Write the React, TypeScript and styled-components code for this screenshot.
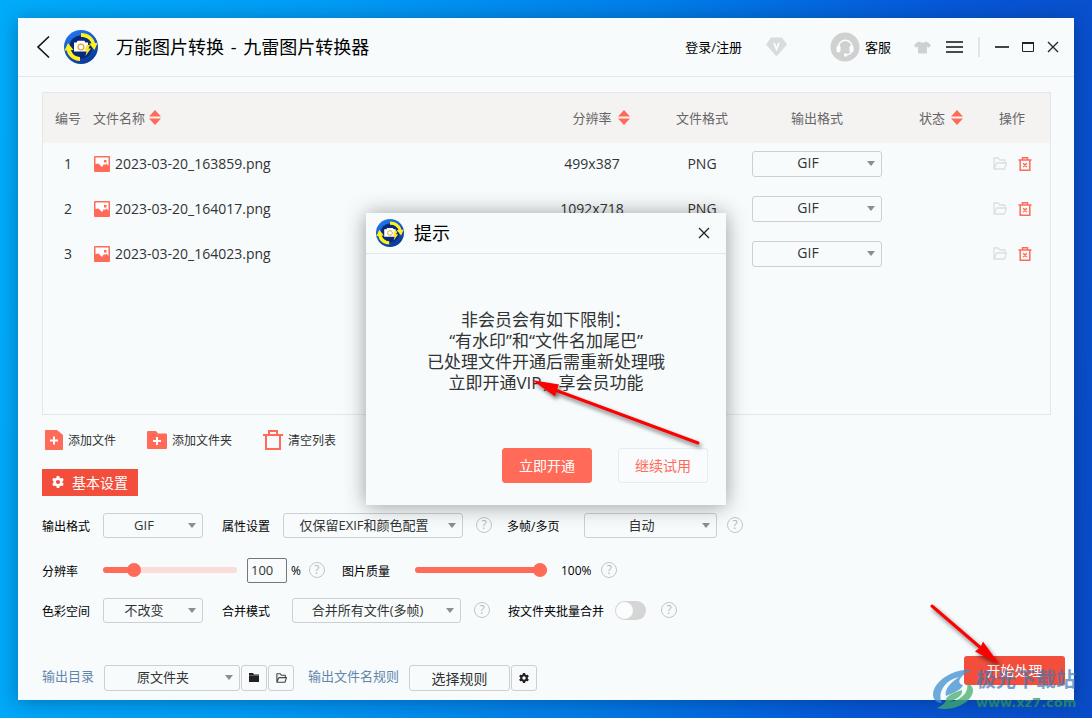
import React, { useId, useState } from 'react';
import styled, { createGlobalStyle } from 'styled-components';

const accent = '#ff6b58';
const accentDark = '#f24e3b';
const surface = '#f7fbfc';
const line = '#e4e7e9';

const GlobalStyle = createGlobalStyle`
  *, *::before, *::after { box-sizing: border-box; }
  body { margin: 0; }
  body, button, input, select {
    font-family: "Open Sans", "Noto Sans CJK SC", sans-serif;
    font-size: 13px;
    color: #333;
  }
  button { padding: 0; border: 0; background: none; cursor: pointer; }
`;

const Desktop = styled.div`
  position: relative;
  display: flex;
  min-height: 100vh;
  padding: 18px;
  overflow: hidden;
  background: linear-gradient(97deg, #00acfa 0%, #009cf6 28%, #007fe9 55%, #0658d8 80%, #0a4cc8 100%);
`;

const AppWindow = styled.div`
  flex: 1;
  display: flex;
  flex-direction: column;
  min-width: 0;
  background: ${surface};
  box-shadow: 0 2px 18px rgba(0, 20, 50, 0.35);
`;

/* title bar */
const TitleBar = styled.header`
  display: flex;
  align-items: center;
  justify-content: space-between;
  height: 59px;
  padding: 0 15px 0 18px;
  border-bottom: 1px solid ${line};
`;

const Group = styled.div<{ $gap?: number }>`
  display: flex;
  align-items: center;
  gap: ${p => p.$gap ?? 0}px;
`;

const AppTitle = styled.h1`
  margin: 0 0 0 4px;
  font-size: 18px;
  font-weight: 400;
  line-height: 24px;
  color: #000;
`;

const Dash = styled.span`
  margin: 0 2px;
`;

const IconButton = styled.button`
  display: flex;
  align-items: center;
  justify-content: center;
  flex: none;
`;

const TitleLink = styled.a`
  color: #000;
  text-decoration: none;
  line-height: 20px;
`;

const SupportLink = styled(TitleLink)`
  display: flex;
  align-items: center;
  gap: 5px;
`;

const SupportTools = styled(Group)`
  margin: 0 13px 0 43px;
`;

const Divider = styled.span`
  width: 2px;
  height: 20px;
  background: #e3e6e7;
`;

/* file list */
const Main = styled.main`
  flex: 1;
  display: flex;
  flex-direction: column;
  padding: 15px 23px 0 24px;
`;

const ListBox = styled.section`
  flex: 1;
  min-height: 240px;
  border: 1px solid ${line};
`;

const FileTable = styled.table`
  width: 100%;
  table-layout: fixed;
  border-collapse: collapse;
`;

const Col = styled.col<{ $w?: number }>`
  width: ${p => (p.$w ? `${p.$w}px` : 'auto')};
`;

const Th = styled.th<{ $left?: boolean; $ops?: boolean }>`
  height: 50px;
  padding: 0 ${p => (p.$ops ? 8 : 0)}px 2px 0;
  background: #f5f3f2;
  font-weight: 400;
  color: #666;
  text-align: ${p => (p.$left ? 'left' : 'center')};
`;

const Td = styled.td<{ $ops?: boolean }>`
  height: 45px;
  padding: 0 ${p => (p.$ops ? 8 : 0)}px 4px 0;
  font-size: 14px;
  text-align: center;
`;

const SortLabel = styled.button<{ $centered?: boolean }>`
  display: inline-flex;
  align-items: center;
  gap: ${p => (p.$centered ? 6 : 4)}px;
  padding-left: ${p => (p.$centered ? 18 : 0)}px;
  color: #666;
`;

const FileName = styled.div`
  display: flex;
  align-items: center;
  gap: 5px;
`;

const RowActions = styled.div`
  display: flex;
  justify-content: center;
  gap: 11px;
`;

/* select */
const SelectBox = styled.span<{ $w: number; $h: number }>`
  position: relative;
  display: inline-flex;
  flex: none;
  width: ${p => p.$w}px;
  height: ${p => p.$h}px;
  vertical-align: middle;
`;

const NativeSelect = styled.select<{ $size: number }>`
  appearance: none;
  width: 100%;
  height: 100%;
  padding: 0 18px 2px 0;
  border: 1px solid #cdd0d2;
  border-radius: 3px;
  background: transparent;
  font-size: ${p => p.$size}px;
  text-align: center;
  text-align-last: center;
`;

const Caret = styled.svg`
  position: absolute;
  right: 7px;
  top: 50%;
  margin-top: -3px;
  pointer-events: none;
`;

/* settings */
const Toolbar = styled.div`
  display: flex;
  gap: 31px;
  margin-top: 15px;
  padding-left: 3px;
`;

const ToolButton = styled.button`
  display: flex;
  align-items: center;
  gap: 5px;
  height: 20px;
  font-size: 12px;
`;

const Tab = styled.button`
  display: flex;
  align-items: center;
  justify-content: center;
  gap: 8px;
  width: 96px;
  height: 27px;
  margin-top: 19px;
  padding-bottom: 1px;
  background: ${accentDark};
  color: #fff;
  font-size: 14px;
`;

const SettingsRow = styled.div<{ $top: number }>`
  display: flex;
  align-items: center;
  height: 25px;
  margin-top: ${p => p.$top}px;
`;

const FieldLabel = styled.label<{ $w: number; $before?: number }>`
  flex: none;
  width: ${p => p.$w}px;
  margin-left: ${p => p.$before ?? 0}px;
  font-size: 12px;
  color: #000;
`;

const Help = styled.button<{ $before: number }>`
  flex: none;
  width: 16px;
  height: 16px;
  margin: 0 0 2px ${p => p.$before}px;
  border: 1px solid #c3c6c8;
  border-radius: 50%;
  font-size: 12px;
  line-height: 14px;
  color: #b4b7b9;
`;

const Slider = styled.input<{ $w: number; $fill: number }>`
  appearance: none;
  flex: none;
  width: ${p => p.$w}px;
  height: 14px;
  margin: 0 0 2px;
  background: transparent;
  &::-webkit-slider-runnable-track {
    height: 6px;
    border-radius: 3px;
    background: linear-gradient(to right, ${accent} ${p => p.$fill}%, #fadcd8 ${p => p.$fill}%);
  }
  &::-webkit-slider-thumb {
    appearance: none;
    width: 14px;
    height: 14px;
    margin-top: -4px;
    border-radius: 50%;
    background: ${accent};
  }
`;

const NumberBox = styled.input`
  width: 40px;
  height: 25px;
  margin: 0 4px 0 10px;
  padding: 0 3px 2px;
  border: 1px solid #777;
  border-radius: 2px;
  background: transparent;
`;

const Unit = styled.span<{ $before?: number }>`
  margin-left: ${p => p.$before ?? 0}px;
  font-size: 12px;
  color: #000;
`;

const Toggle = styled.input`
  appearance: none;
  flex: none;
  width: 31px;
  height: 19px;
  margin: 0;
  padding: 1px;
  border-radius: 10px;
  background: #d5d5d5;
  &::before {
    content: '';
    display: block;
    width: 17px;
    height: 17px;
    border-radius: 50%;
    background: #fbfdfd;
  }
  &:checked { background: ${accent}; padding-left: 13px; }
`;

/* footer */
const Footer = styled.footer`
  display: flex;
  justify-content: space-between;
  align-items: flex-end;
  margin-top: 33px;
  padding: 0 9px 9px 24px;
`;

const FooterLabel = styled.label<{ $w: number }>`
  width: ${p => p.$w}px;
  padding-bottom: 4px;
  color: #6485ab;
  line-height: 20px;
`;

const OutlineButton = styled.button<{ $w: number }>`
  display: flex;
  align-items: center;
  justify-content: center;
  width: ${p => p.$w}px;
  height: 26px;
  padding-bottom: 1px;
  border: 1px solid #cdd0d2;
  border-radius: 3px;
  font-size: 14px;
`;

const NameRule = styled(Group)`
  margin-left: 14px;
`;

const StartButton = styled.button`
  width: 101px;
  height: 29px;
  margin-bottom: 6px;
  padding-bottom: 1px;
  border-radius: 3px;
  background: ${accentDark};
  color: #fff;
  font-size: 14px;
`;

/* dialog */
const Dialog = styled.div`
  position: absolute;
  left: 50%;
  top: 50%;
  transform: translate(-50%, -50%);
  display: flex;
  flex-direction: column;
  width: 360px;
  background: ${surface};
  box-shadow: 0 1px 20px rgba(0, 0, 0, 0.38);
`;

const DialogHead = styled.div`
  display: flex;
  align-items: center;
  gap: 10px;
  height: 41px;
  padding: 0 16px 0 10px;
  border-bottom: 1px solid ${line};
`;

const DialogTitle = styled.h2`
  flex: 1;
  margin: 0;
  font-size: 18px;
  font-weight: 400;
  line-height: 24px;
  color: #000;
`;

const DialogText = styled.p`
  margin: 55px 0;
  font-size: 17px;
  line-height: 21px;
  text-align: center;
`;

const DialogActions = styled.div`
  display: flex;
  justify-content: flex-end;
  gap: 26px;
  padding: 0 18px 22px;
`;

const DialogButton = styled.button<{ $primary?: boolean }>`
  width: 90px;
  height: 35px;
  padding-bottom: 2px;
  border: 1px solid ${p => (p.$primary ? accent : '#e3edf5')};
  border-radius: 3px;
  background: ${p => (p.$primary ? accent : '#f9fbfd')};
  color: ${p => (p.$primary ? '#fff' : accent)};
  font-size: 14px;
`;

/* annotations over the window */
const DialogArrow = styled.svg`
  position: absolute;
  left: 160px;
  top: 160px;
  pointer-events: none;
  filter: drop-shadow(2px 3px 2px rgba(0, 0, 0, 0.55));
`;

const StartArrow = styled.svg`
  position: absolute;
  right: 84px;
  bottom: 44px;
  pointer-events: none;
  filter: drop-shadow(2px 3px 2px rgba(0, 0, 0, 0.55));
`;

const Watermark = styled.div`
  position: absolute;
  right: 8px;
  bottom: 7px;
  display: flex;
  align-items: flex-end;
  width: 152px;
  pointer-events: none;
`;

const SiteName = styled.div`
  width: 108px;
  margin-bottom: 3px;
  font-size: 20px;
  font-weight: 700;
  line-height: 25px;
  white-space: nowrap;
  color: rgba(62, 120, 182, 0.7);
`;

const SiteUrl = styled.div`
  font-family: "DejaVu Sans", sans-serif;
  font-size: 13px;
  font-weight: 700;
  line-height: 16px;
  color: rgba(42, 150, 85, 0.75);
`;

const Logo = ({ size }: { size: number }) => {
  const id = useId();
  return (
    <svg width={size} height={size} viewBox="0 0 34 34" aria-hidden="true">
      <defs>
        <linearGradient id={id} x1="0" y1="0" x2="0.5" y2="1">
          <stop offset="0" stopColor="#2a80f5" />
          <stop offset="0.5" stopColor="#1559cf" />
          <stop offset="1" stopColor="#0c3c9c" />
        </linearGradient>
      </defs>
      <circle cx="17" cy="17" r="17" fill={`url(#${id})`} />
      <circle cx="17" cy="17" r="11.500" fill="#062a78" />
      <path d="M17 3c7 0 12.500 4 14 10h2.500L30.500 20 25 13.500h2.500C26 9.500 22.500 7 17 7z" fill="#fff01c" />
      <path d="M16 31C9 30.500 4 26.500 2.800 20.500H.5L4 13l5.500 7H7c1.200 4 4.300 6.700 9 7z" fill="#fff01c" />
      <path d="M10 12.500h2.500l1.200-1.700h6.600l1.200 1.700H24V21.500H10z" fill="#fff" />
      <circle cx="17" cy="17" r="2.900" fill="#fff" stroke="#d9a441" strokeWidth="1.200" />
      <path d="M22.500 15h3.500l-1.500 3.500H27L21.500 26l1.200-5.500h-2z" fill="#ffe81c" />
    </svg>
  );
};

const SortIcon = () => (
  <svg width="12" height="15" viewBox="0 0 12 15" aria-hidden="true">
    <path d="M6 0l6 6.500H0zM6 15L0 8.500h12z" fill={accent} />
  </svg>
);

const PictureIcon = () => (
  <svg width="17" height="16" viewBox="0 0 17 16" aria-hidden="true">
    <rect x="1" width="16" height="16" rx="1" fill={accent} />
    <path d="M2.500 1.500h13v8.500l-2-2.500-1.500 1.500-1-1-2 3L5.500 7.500 2.500 8z" fill="#fff" />
    <rect x="11" y="4" width="2.500" height="2.500" fill={accent} />
  </svg>
);

const OpenFolderIcon = ({ color }: { color: string }) => (
  <svg width="14" height="13" viewBox="0 0 14 13" fill="none" stroke={color} strokeWidth="1.300" strokeLinejoin="round" aria-hidden="true">
    <path d="M1 12V1h4.500l1.200 2H12v2.500M1 12l2.500-6H13.500L11.500 12z" />
  </svg>
);

const DeleteIcon = () => (
  <svg width="14" height="14" viewBox="0 0 14 14" fill="none" stroke={accent} strokeWidth="1.500" aria-hidden="true">
    <path d="M0.500 3h13M4.500 3V.8h5V3M2.200 3v10.200h9.600V3M5.200 6.300l3.600 3.600M8.800 6.300L5.200 9.900" />
  </svg>
);

const CloseIcon = () => (
  <svg width="12" height="12" viewBox="0 0 12 12" stroke="#222" strokeWidth="1.300" aria-hidden="true">
    <path d="M1 1l10 10M11 1L1 11" />
  </svg>
);

const Gear = ({ size, color, hole }: { size: number; color: string; hole: string }) => (
  <svg width={size} height={size} viewBox="0 0 12 12" aria-hidden="true">
    <g fill={color}>
      <circle cx="6" cy="6" r="4.600" />
      {[0, 60, 120].map(a => (
        <rect key={a} x="4.600" y="0" width="2.800" height="12" rx="0.600" transform={`rotate(${a} 6 6)`} />
      ))}
    </g>
    <circle cx="6" cy="6" r="2.100" fill={hole} />
  </svg>
);

type DropProps = { id?: string; label?: string; w: number; h?: number; size?: number; options: string[] };

const Drop = ({ id, label, w, h = 25, size = 13, options }: DropProps) => (
  <SelectBox $w={w} $h={h}>
    <NativeSelect id={id} aria-label={label} $size={size}>
      {options.map(o => <option key={o}>{o}</option>)}
    </NativeSelect>
    <Caret width="8" height="5" viewBox="0 0 8 5" aria-hidden="true">
      <path d="M0 0h8L4 5z" fill="#8b8d8f" />
    </Caret>
  </SelectBox>
);

const HelpTip = ({ before }: { before: number }) => (
  <Help type="button" $before={before} aria-label="帮助">?</Help>
);

const files = [
  { name: '2023-03-20_163859.png', size: '499x387' },
  { name: '2023-03-20_164017.png', size: '1092x718' },
  { name: '2023-03-20_164023.png', size: '499x387' },
];

const formats = ['GIF', 'PNG', 'JPG', 'BMP', 'WEBP'];

export default function App() {
  const [scale, setScale] = useState(100);
  const [quality, setQuality] = useState(100);

  return (
    <>
      <GlobalStyle />
      <Desktop>
        <AppWindow>
          <TitleBar>
            <Group $gap={14}>
              <IconButton type="button" aria-label="返回">
                <svg width="14" height="24" viewBox="0 0 14 24" fill="none" stroke="#111" strokeWidth="1.600">
                  <path d="M13 1.500L2 12l11 10.500" />
                </svg>
              </IconButton>
              <Logo size={34} />
              <AppTitle>万能图片转换 <Dash>-</Dash> 九雷图片转换器</AppTitle>
            </Group>
            <Group>
              <Group $gap={24}>
                <TitleLink href="#login">登录/注册</TitleLink>
                <IconButton type="button" aria-label="会员">
                  <svg width="21" height="20" viewBox="0 0 21 20">
                    <path d="M5 .5h11l5 7L10.500 19.500 0 7.500z" fill="#d9dcdd" />
                    <path d="M8 6l2.500 6L13 6" fill="none" stroke="#fff" strokeWidth="1.800" />
                  </svg>
                </IconButton>
              </Group>
              <SupportTools $gap={23}>
                <SupportLink href="#support">
                  <svg width="30" height="30" viewBox="0 0 30 30" aria-hidden="true">
                    <circle cx="15" cy="15" r="14.500" fill="#cfd0d0" />
                    <path d="M8.500 15a6.800 6.800 0 0 1 13.600 0M21.500 18.500c-.5 3-2.500 4.300-5 4.300" fill="none" stroke="#fff" strokeWidth="1.500" />
                    <rect x="6.500" y="13.500" width="4" height="7" rx="2" fill="#fff" />
                    <rect x="19.500" y="13.500" width="4" height="7" rx="2" fill="#fff" />
                    <circle cx="15.500" cy="23" r="1.700" fill="#fff" />
                  </svg>
                  客服
                </SupportLink>
                <Group $gap={15}>
                  <IconButton type="button" aria-label="皮肤">
                    <svg width="17" height="13" viewBox="0 0 17 13">
                      <path d="M5.500.5c1 1.600 5 1.600 6 0l2.500.7 3 3.300-2.200 2.300-1.800-1.300V12.500H4V5.500L2.200 6.800 0 4.500l3-3.300z" fill="#cfd0d0" />
                    </svg>
                  </IconButton>
                  <IconButton type="button" aria-label="菜单">
                    <svg width="17" height="12" viewBox="0 0 17 12" stroke="#111" strokeWidth="1.600">
                      <path d="M0 1h17M0 6h17M0 11h17" />
                    </svg>
                  </IconButton>
                  <Divider />
                  <IconButton type="button" aria-label="最小化">
                    <svg width="14" height="2" viewBox="0 0 14 2"><path d="M0 0h14v2H0z" fill="#444" /></svg>
                  </IconButton>
                </Group>
              </SupportTools>
              <Group $gap={13}>
                <IconButton type="button" aria-label="最大化">
                  <svg width="12" height="10" viewBox="0 0 12 10" fill="none" stroke="#222">
                    <path d="M0 1h12" strokeWidth="2" />
                    <path d="M.5 1v8.500h11V1" />
                  </svg>
                </IconButton>
                <IconButton type="button" aria-label="关闭"><CloseIcon /></IconButton>
              </Group>
            </Group>
          </TitleBar>

          <Main>
            <ListBox>
              <FileTable>
                <colgroup>
                  <Col $w={50} />
                  <Col />
                  <Col $w={120} />
                  <Col $w={100} />
                  <Col $w={130} />
                  <Col $w={100} />
                  <Col $w={68} />
                </colgroup>
                <thead>
                  <tr>
                    <Th>编号</Th>
                    <Th $left><SortLabel type="button">文件名称<SortIcon /></SortLabel></Th>
                    <Th><SortLabel type="button" $centered>分辨率<SortIcon /></SortLabel></Th>
                    <Th>文件格式</Th>
                    <Th>输出格式</Th>
                    <Th><SortLabel type="button" $centered>状态<SortIcon /></SortLabel></Th>
                    <Th $ops>操作</Th>
                  </tr>
                </thead>
                <tbody>
                  {files.map((f, i) => (
                    <tr key={f.name}>
                      <Td>{i + 1}</Td>
                      <Td><FileName><PictureIcon />{f.name}</FileName></Td>
                      <Td>{f.size}</Td>
                      <Td>PNG</Td>
                      <Td><Drop label="输出格式" w={130} h={26} size={14} options={formats} /></Td>
                      <Td />
                      <Td $ops>
                        <RowActions>
                          <IconButton type="button" aria-label="打开"><OpenFolderIcon color="#dcdfe0" /></IconButton>
                          <IconButton type="button" aria-label="删除"><DeleteIcon /></IconButton>
                        </RowActions>
                      </Td>
                    </tr>
                  ))}
                </tbody>
              </FileTable>
            </ListBox>

            <Toolbar>
              <ToolButton type="button">
                <svg width="18" height="20" viewBox="0 0 18 20" aria-hidden="true">
                  <path d="M1 0h11l6 5v14a1 1 0 0 1-1 1H1a1 1 0 0 1-1-1V1a1 1 0 0 1 1-1z" fill={accent} />
                  <path d="M9 6.500v8M5 10.500h8" stroke="#fff" strokeWidth="2" />
                </svg>
                添加文件
              </ToolButton>
              <ToolButton type="button">
                <svg width="20" height="18" viewBox="0 0 20 18" aria-hidden="true">
                  <path d="M1 0h8l2 2.500h8a1 1 0 0 1 1 1V17a1 1 0 0 1-1 1H1a1 1 0 0 1-1-1V1a1 1 0 0 1 1-1z" fill={accent} />
                  <path d="M10 6v8M6 10h8" stroke="#fff" strokeWidth="2" />
                </svg>
                添加文件夹
              </ToolButton>
              <ToolButton type="button">
                <svg width="20" height="20" viewBox="0 0 20 20" fill="none" stroke={accent} strokeWidth="2" aria-hidden="true">
                  <path d="M0 5h20M6 5V1h8v4M3 5v14h14V5" />
                </svg>
                清空列表
              </ToolButton>
            </Toolbar>

            <Tab type="button"><Gear size={12} color="#fff" hole={accentDark} />基本设置</Tab>

            <SettingsRow $top={17}>
              <FieldLabel $w={61} htmlFor="format">输出格式</FieldLabel>
              <Drop id="format" w={100} options={formats} />
              <FieldLabel $w={61} $before={19} htmlFor="attrs">属性设置</FieldLabel>
              <Drop id="attrs" w={180} options={['仅保留EXIF和颜色配置']} />
              <HelpTip before={13} />
              <FieldLabel $w={77} $before={15} htmlFor="frames">多帧/多页</FieldLabel>
              <Drop id="frames" w={133} options={['自动']} />
              <HelpTip before={10} />
            </SettingsRow>

            <SettingsRow $top={20}>
              <FieldLabel $w={61} htmlFor="scale">分辨率</FieldLabel>
              <Slider id="scale" type="range" min={0} max={500} value={scale} $w={134} $fill={scale / 5}
                onChange={e => setScale(Number(e.target.value))} />
              <NumberBox type="text" aria-label="分辨率百分比" value={scale}
                onChange={e => setScale(Number(e.target.value) || 0)} />
              <Unit>%</Unit>
              <HelpTip before={8} />
              <FieldLabel $w={73} $before={17} htmlFor="quality">图片质量</FieldLabel>
              <Slider id="quality" type="range" min={0} max={100} value={quality} $w={132} $fill={quality}
                onChange={e => setQuality(Number(e.target.value))} />
              <Unit $before={14}>{quality}%</Unit>
              <HelpTip before={10} />
            </SettingsRow>

            <SettingsRow $top={15}>
              <FieldLabel $w={61} htmlFor="space">色彩空间</FieldLabel>
              <Drop id="space" w={100} options={['不改变']} />
              <FieldLabel $w={70} $before={19} htmlFor="merge">合并模式</FieldLabel>
              <Drop id="merge" w={169} options={['合并所有文件(多帧)']} />
              <HelpTip before={13} />
              <FieldLabel $w={107} $before={18} htmlFor="batch">按文件夹批量合并</FieldLabel>
              <Toggle id="batch" type="checkbox" />
              <HelpTip before={15} />
            </SettingsRow>
          </Main>

          <Footer>
            <Group>
              <FooterLabel $w={62} htmlFor="outdir">输出目录</FooterLabel>
              <Group $gap={1}>
                <Drop id="outdir" w={136} h={26} options={['原文件夹']} />
                <OutlineButton type="button" $w={26} aria-label="选择文件夹">
                  <svg width="10" height="9" viewBox="0 0 10 9">
                    <path d="M0 0h4l1 1.500h5V9H0z" fill="#222" />
                    <path d="M0 2.500h10" stroke="#888" strokeWidth="0.600" />
                  </svg>
                </OutlineButton>
                <OutlineButton type="button" $w={26} aria-label="打开文件夹">
                  <svg width="11" height="10" viewBox="0 0 14 13" fill="none" stroke="#444" strokeWidth="1.400" strokeLinejoin="round">
                    <path d="M1 12V1h4.500l1.200 2H12v2.500M1 12l2.500-6H13.500L11.500 12z" />
                  </svg>
                </OutlineButton>
              </Group>
              <NameRule $gap={1}>
                <FooterLabel as="span" $w={100}>输出文件名规则</FooterLabel>
                <OutlineButton type="button" $w={101}>选择规则</OutlineButton>
                <OutlineButton type="button" $w={26} aria-label="规则设置"><Gear size={10} color="#222" hole={surface} /></OutlineButton>
              </NameRule>
            </Group>
            <StartButton type="button">开始处理</StartButton>
          </Footer>
        </AppWindow>

        <Dialog role="dialog" aria-labelledby="dialog-title">
          <DialogHead>
            <Logo size={28} />
            <DialogTitle id="dialog-title">提示</DialogTitle>
            <IconButton type="button" aria-label="关闭提示"><CloseIcon /></IconButton>
          </DialogHead>
          <DialogText>
            非会员会有如下限制：<br />
            “有水印”和“文件名加尾巴”<br />
            已处理文件开通后需重新处理哦<br />
            立即开通VIP，享会员功能
          </DialogText>
          <DialogActions>
            <DialogButton type="button" $primary>立即开通</DialogButton>
            <DialogButton type="button">继续试用</DialogButton>
          </DialogActions>
          <DialogArrow width="180" height="76" viewBox="0 0 180 76" aria-hidden="true">
            <path d="M29 17L172 70" stroke="#fe0000" strokeWidth="3" strokeLinecap="round" />
            <path d="M6 7l27 4.500-2.500 6L29 23.500z" fill="#fe0000" />
          </DialogArrow>
        </Dialog>

        <StartArrow width="80" height="74" viewBox="0 0 80 74" aria-hidden="true">
          <path d="M4 6L54 49" stroke="#fe0000" strokeWidth="3" strokeLinecap="round" />
          <path d="M71 64L55 41.500 52.500 47 47 51.500z" fill="#fe0000" />
        </StartArrow>

        <Watermark>
          <svg width="44" height="42" viewBox="0 0 44 42" aria-hidden="true">
            <path d="M40 1C22-1 2 12 1 25c0 6 4 9 9 9-5-9 2-23 17-26C18 14 12 21 14 27c8-3 15-6 17-11C22 14 31 4 40 1z" fill="#3d8fd0" opacity="0.750" />
            <path d="M5 39c17 4 35-6 36-17 0-4-2-7-6-7 2 8-5 16-18 18 9-3 14-7 13-12-6 2-17 6-16 10-1 4-5 6-9 8z" fill="#43ae68" opacity="0.750" />
          </svg>
          <div>
            <SiteName>极光下载站</SiteName>
            <SiteUrl>www.xz7.com</SiteUrl>
          </div>
        </Watermark>
      </Desktop>
    </>
  );
}
